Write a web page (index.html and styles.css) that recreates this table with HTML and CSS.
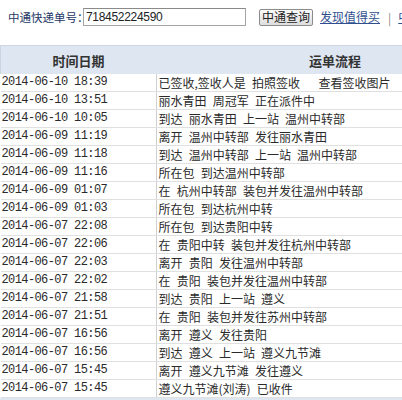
FILE: index.html
```html
<!DOCTYPE html>
<html lang="zh">
<head>
<meta charset="utf-8">
<link rel="stylesheet" href="styles.css">
</head>
<body>
<div class="page">
  <div class="search">
    <span class="label">中通快递单号：</span>
    <input class="no" type="text" value="718452224590">
    <button class="btn">中通查询</button>
    <a class="link" href="#">发现值得买</a>
    <span class="sep">|</span>
    <a class="link" href="#">中通快递</a>
  </div>
  <table class="track">
    <thead>
      <tr><th class="c1">时间日期</th><th class="c2">运单流程</th></tr>
    </thead>
    <tbody>
      <tr><td class="d">2014-06-10 18:39</td><td>已签收,签收人是 拍照签收&nbsp;&nbsp;&nbsp;查看签收图片</td></tr>
      <tr><td class="d">2014-06-10 13:51</td><td>丽水青田 周冠军 正在派件中</td></tr>
      <tr><td class="d">2014-06-10 10:05</td><td>到达 丽水青田 上一站 温州中转部</td></tr>
      <tr><td class="d">2014-06-09 11:19</td><td>离开 温州中转部 发往丽水青田</td></tr>
      <tr><td class="d">2014-06-09 11:18</td><td>到达 温州中转部 上一站 温州中转部</td></tr>
      <tr><td class="d">2014-06-09 11:16</td><td>所在包 到达温州中转部</td></tr>
      <tr><td class="d">2014-06-09 01:07</td><td>在 杭州中转部 装包并发往温州中转部</td></tr>
      <tr><td class="d">2014-06-09 01:03</td><td>所在包 到达杭州中转</td></tr>
      <tr><td class="d">2014-06-07 22:08</td><td>所在包 到达贵阳中转</td></tr>
      <tr><td class="d">2014-06-07 22:06</td><td>在 贵阳中转 装包并发往杭州中转部</td></tr>
      <tr><td class="d">2014-06-07 22:03</td><td>离开 贵阳 发往温州中转部</td></tr>
      <tr><td class="d">2014-06-07 22:02</td><td>在 贵阳 装包并发往温州中转部</td></tr>
      <tr><td class="d">2014-06-07 21:58</td><td>到达 贵阳 上一站 遵义</td></tr>
      <tr><td class="d">2014-06-07 21:51</td><td>在 贵阳 装包并发往苏州中转部</td></tr>
      <tr><td class="d">2014-06-07 16:56</td><td>离开 遵义 发往贵阳</td></tr>
      <tr><td class="d">2014-06-07 16:56</td><td>到达 遵义 上一站 遵义九节滩</td></tr>
      <tr><td class="d">2014-06-07 15:45</td><td>离开 遵义九节滩 发往遵义</td></tr>
      <tr><td class="d">2014-06-07 15:45</td><td>遵义九节滩(刘涛) 已收件</td></tr>
    </tbody>
  </table>
  <div class="foot"></div>
</div>
</body>
</html>
```
FILE: styles.css
```css
html, body {
  margin: 0;
  padding: 0;
  background: #fff;
  overflow: hidden;
}
.page {
  width: 560px;
  font-family: "Noto Sans CJK SC", "Liberation Sans", sans-serif;
  font-size: 12px;
  color: #333;
}
.search {
  display: flex;
  align-items: center;
  height: 18px;
  padding: 8px 0 0 8px;
  white-space: nowrap;
}
.label {
  width: 75px;
  color: #243766;
  font-size: 11.5px;
  line-height: 18px;
}
.no {
  box-sizing: border-box;
  width: 163px;
  height: 18px;
  margin: 0;
  padding: 0 2px;
  border: 1px solid #a5a5a5;
  border-top-color: #8a8a8a;
  font-family: "Liberation Sans", sans-serif;
  font-size: 12px;
  color: #222;
  letter-spacing: -0.3px;
}
.btn {
  box-sizing: border-box;
  height: 17px;
  margin: 0 0 0 13px;
  padding: 0 2px;
  border: 1px solid #8c8c8c;
  border-radius: 2px;
  background: linear-gradient(#fbfbfb, #dedede);
  font-family: "Noto Sans CJK SC", sans-serif;
  font-size: 12px;
  line-height: 14px;
  color: #222;
}
.link {
  margin-left: 7px;
  color: #2f4f8f;
  text-decoration: underline;
  line-height: 18px;
}
.sep {
  margin-left: 8px;
  color: #888;
}
.track {
  margin-top: 19px;
  width: 560px;
  border-collapse: collapse;
  table-layout: fixed;
}
.track th {
  height: 28px;
  padding: 0;
  background: #dde6f1;
  border-top: 1px solid #ccd6e3;
  font-size: 13px;
  font-weight: bold;
  color: #333;
  text-align: center;
}
.track th.c1 {
  width: 155px;
  border-left: 1px solid #ccd6e3;
}
.track th.c2 {
  text-align: left;
  padding-left: 153px;
}
.track td {
  height: 17px;
  padding: 0;
  border-bottom: 1px solid #e0e0e0;
  line-height: 17px;
  white-space: nowrap;
  vertical-align: middle;
  color: #2a2a2a;
}
.track td.d {
  font-family: "Liberation Mono", monospace;
  font-size: 12px;
  letter-spacing: -0.6px;
  padding-left: 1px;
  border-right: 1px solid #d0d0d0;
}
.track td + td {
  padding-left: 2px;
  word-spacing: 3.5px;
}
.foot {
  height: 4px;
  background: #dde6f1;
}
```
